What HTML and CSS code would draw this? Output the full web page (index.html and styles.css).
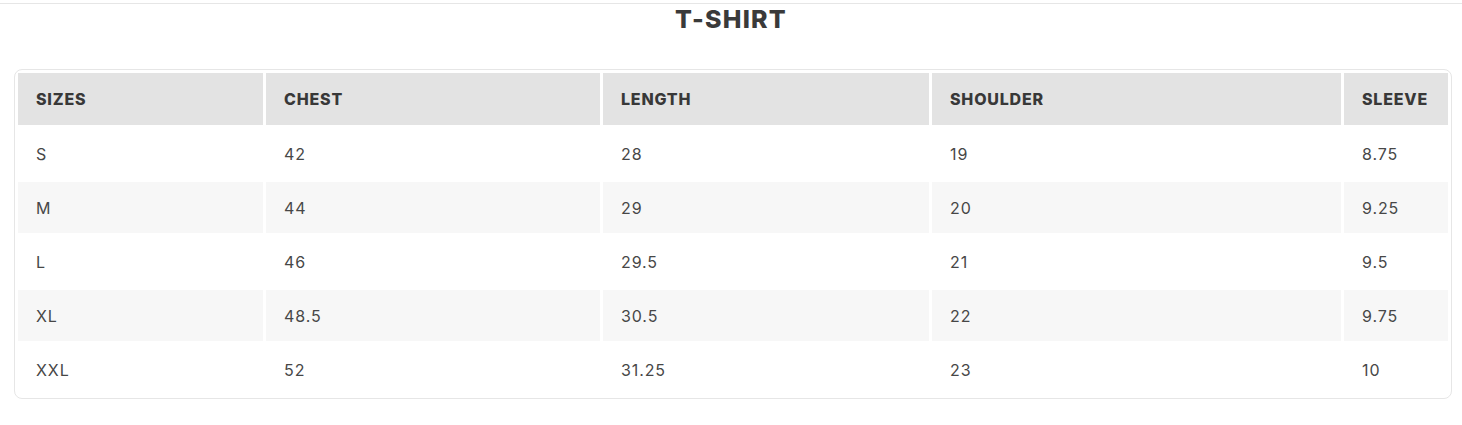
FILE: index.html
```html
<!DOCTYPE html>
<html lang="en">
<head>
<meta charset="utf-8">
<title>T-Shirt Size Chart</title>
<link rel="stylesheet" href="styles.css">
</head>
<body>
<div class="page">
  <div class="divider"></div>
  <h2 class="title">T-SHIRT</h2>
  <div class="chart">
    <table class="sizes">
      <colgroup>
        <col class="c1"><col class="c2"><col class="c3"><col class="c4"><col class="c5">
      </colgroup>
      <thead>
        <tr><th>SIZES</th><th>CHEST</th><th>LENGTH</th><th>SHOULDER</th><th>SLEEVE</th></tr>
      </thead>
      <tbody>
        <tr><td>S</td><td>42</td><td>28</td><td>19</td><td>8.75</td></tr>
        <tr><td>M</td><td>44</td><td>29</td><td>20</td><td>9.25</td></tr>
        <tr><td>L</td><td>46</td><td>29.5</td><td>21</td><td>9.5</td></tr>
        <tr><td>XL</td><td>48.5</td><td>30.5</td><td>22</td><td>9.75</td></tr>
        <tr><td>XXL</td><td>52</td><td>31.25</td><td>23</td><td>10</td></tr>
      </tbody>
    </table>
  </div>
</div>
</body>
</html>
```

FILE: styles.css
```css
body {
  margin: 0;
  background: #ffffff;
  font-family: Inter, "Open Sans", "Liberation Sans", sans-serif;
  color: #444444;
}

.page {
  padding-top: 3px;
}

.divider {
  border-top: 1px solid #e6e6e6;
}

.title {
  margin: 0;
  height: 65px;
  padding-top: 0;
  box-sizing: border-box;
  text-align: center;
  font-size: 25px;
  line-height: 30px;
  font-weight: 800;
  letter-spacing: 1.2px;
  color: #3a3a3a;
}

.chart {
  margin: 0 10px 0 14px;
  border: 1px solid #e6e6e6;
  border-radius: 8px;
}

.sizes {
  width: 100%;
  table-layout: fixed;
  border-collapse: separate;
  border-spacing: 3px;
}

.c1 { width: 245px; }
.c2 { width: 334px; }
.c3 { width: 326px; }
.c4 { width: 409px; }
.c5 { width: 104px; }

.sizes th,
.sizes td {
  padding: 0 18px;
  text-align: left;
  vertical-align: middle;
  font-size: 16px;
  white-space: nowrap;
}

.sizes th {
  height: 52px;
  background: #e3e3e3;
  color: #383838;
  font-weight: 800;
  letter-spacing: 0.8px;
}

.sizes td {
  height: 51px;
  font-weight: 400;
  letter-spacing: 0.9px;
  color: #474747;
}

.sizes tbody tr:nth-child(even) td {
  background: #f7f7f7;
}
```
